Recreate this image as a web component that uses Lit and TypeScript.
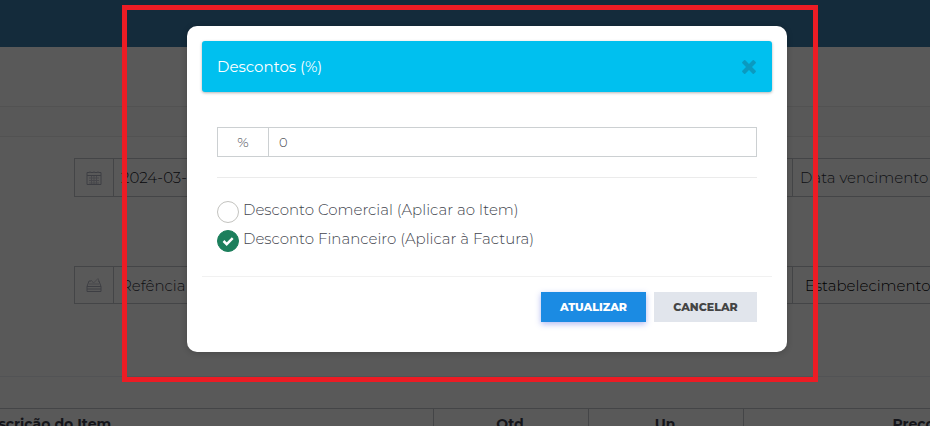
import { LitElement, html, css, svg } from "lit";
import { customElement, state } from "lit/decorators.js";

const calendarIcon = svg`<path d="M1 2.500h14v12H1zM1 5.500h14" /><path class="faint" d="M4 1v2M8 1v2M12 1v2M3 8h10M3 10.500h10M3 13h10M5.500 6v8M8 6v8M10.500 6v8" />`;
const registerIcon = svg`<path d="M1 9.500h14v5H1zM1 12h14M1 9.500L3 4h2M15 9.500L13 4h-1" /><path class="faint" d="M5 3l2.500 3L12 1.500l1 2.500M3 7h10" />`;

@customElement("app-root")
export class AppRoot extends LitElement {
  @state() private target = "invoice";

  private options = [
    { id: "item", label: "Desconto Comercial (Aplicar ao Item)" },
    { id: "invoice", label: "Desconto Financeiro (Aplicar à Factura)" },
  ];

  static styles = css`
    :host {
      display: block;
      position: relative;
      height: 100vh;
      overflow: hidden;
      background: #fff;
      color: #575962;
      font-family: Montserrat, Inter, "Open Sans", sans-serif;
      font-size: 15px;
      font-weight: 300;
    }
    * { box-sizing: border-box; }
    input, button { font: inherit; color: inherit; margin: 0; }
    .topbar { height: 47px; background: #397ba9; }
    .strip { height: 60px; border-bottom: 1px solid #ebebeb; }
    .strip.thin { height: 30px; background: #fdfdfd; }
    .form {
      display: grid;
      grid-template-columns: 1fr 177px;
      gap: 69px 30px;
      padding: 21px 0 72px 74px;
      border-bottom: 1px solid #ebedf2;
    }
    .field {
      display: flex;
      height: 39px;
      border: 1px solid #c4c6cc;
      border-right: 0;
    }
    .field.short { height: 38px; }
    .addon {
      flex: none;
      width: 39px;
      display: grid;
      place-items: center;
      border-right: 1px solid #c4c6cc;
    }
    .addon svg {
      width: 16px;
      height: 16px;
      fill: none;
      stroke: #b0b2c0;
      stroke-width: 1;
    }
    .addon .faint { stroke: #cbccd6; }
    .field input {
      flex: 1;
      min-width: 0;
      border: 0;
      padding: 0 0 0 7px;
      background: none;
      color: #14161f;
    }
    .field input.roomy { padding: 0 0 0 12px; color: #000; }
    .field input::placeholder { color: #30323c; opacity: 1; }
    .items {
      width: calc(100% + 182px);
      margin: 31px 0 0 -26px;
      border-collapse: collapse;
      table-layout: fixed;
    }
    .items th {
      height: 30px;
      padding: 0 5px 0 3px;
      border: 1px solid #c4c6cc;
      font-size: 14px;
      font-weight: 700;
      color: #3c3e4c;
    }
    .items th:first-child { text-align: left; }
    .col-name { width: 459px; }
    .col-small { width: 155px; }

    .overlay {
      position: absolute;
      inset: 0;
      padding: 5px 112px 0 122px;
      background: rgba(0, 0, 0, 0.65);
    }
    .frame {
      border: 5px solid #ec1c24;
      padding: 16px 26px 25px 60px;
    }
    .modal {
      padding: 15px;
      border-radius: 10px;
      background: #fff;
      box-shadow: 0 1px 6px rgba(0, 0, 0, 0.2);
    }
    .head {
      display: flex;
      align-items: center;
      justify-content: space-between;
      height: 51px;
      padding: 0 15px;
      border-radius: 3px;
      background: #00c0ef;
      box-shadow: 0 1px 3px rgba(0, 0, 0, 0.3);
      color: #fff;
    }
    .title { margin: 0; font-size: 15px; font-weight: 400; }
    .close {
      padding: 0;
      border: 0;
      background: none;
      width: 16px;
      height: 16px;
    }
    .close svg { display: block; width: 16px; height: 16px; fill: #0a9ac0; }
    .body { padding: 35px 15px 24px; }
    .percent {
      display: flex;
      height: 30px;
      border: 1px solid #ccd0d2;
      font-size: 13px;
      color: #484a52;
    }
    .percent label {
      width: 51px;
      display: grid;
      place-items: center;
      border-right: 1px solid #ccd0d2;
      font-size: 14px;
    }
    .percent input {
      flex: 1;
      min-width: 0;
      border: 0;
      padding: 0 10px;
      background: none;
    }
    .rule { margin: 20px 0 23px; border: 0; border-top: 1px solid #ebebeb; }
    .options { display: grid; gap: 7px; }
    .option {
      display: flex;
      gap: 4px;
      height: 22px;
      line-height: 18px;
      color: #42454e;
    }
    .mark { position: relative; width: 22px; height: 22px; }
    .mark input {
      display: block;
      appearance: none;
      width: 22px;
      height: 22px;
      border: 1px solid #c3c3bf;
      border-radius: 50%;
      background: #fff;
    }
    .mark input:checked { border-color: #1c7f5c; background: #1c7f5c; }
    .mark svg {
      position: absolute;
      inset: 0;
      fill: none;
      stroke: #fff;
      stroke-width: 2.5;
      pointer-events: none;
    }
    .foot {
      display: flex;
      justify-content: flex-end;
      gap: 8px;
      padding: 15px;
      border-top: 1px solid #f1f1f1;
    }
    .btn {
      height: 30px;
      padding: 0;
      border: 0;
      font-size: 11px;
      font-weight: 800;
    }
    .primary {
      width: 105px;
      background: #1b8be3;
      color: #fff;
      box-shadow: 0 2px 6px rgba(60, 80, 220, 0.4);
    }
    .secondary { width: 103px; background: #e1e5ec; color: #444; }
  `;

  private field(icon: unknown, label: string, kind = "", value = "", inputKind = "") {
    return html`<div class="field ${kind}">
      <span class="addon"><svg viewBox="0 0 16 16" aria-hidden="true">${icon}</svg></span>
      <input class=${inputKind} type="text" aria-label=${label} placeholder=${label} .value=${value} />
    </div>`;
  }

  render() {
    return html`
      <main>
        <div class="topbar"></div>
        <div class="strip"></div>
        <div class="strip thin"></div>
        <div class="form">
          ${this.field(calendarIcon, "Data", "", "2024-03-")}
          ${this.field(calendarIcon, "Data vencimento")}
          ${this.field(registerIcon, "Refência", "short")}
          ${this.field(registerIcon, "Estabelecimento", "short", "Estabelecimento", "roomy")}
        </div>
        <table class="items">
          <colgroup>
            <col class="col-name" /><col class="col-small" /><col class="col-small" /><col />
          </colgroup>
          <thead>
            <tr><th>Descrição do Item</th><th>Qtd</th><th>Un</th><th>Preço</th></tr>
          </thead>
        </table>
      </main>
      <div class="overlay">
        <div class="frame">
          <section class="modal" role="dialog" aria-labelledby="title">
            <header class="head">
              <h2 class="title" id="title">Descontos (%)</h2>
              <button class="close" type="button" aria-label="Fechar">
                <svg viewBox="0 0 16 16"><path d="M4.300 1.300L8 5l3.700-3.700q.6-.5 1.200 0l1.800 1.800q.5.600 0 1.200L11 8l3.700 3.700q.5.600 0 1.200l-1.800 1.800q-.6.500-1.200 0L8 11l-3.700 3.700q-.6.500-1.200 0l-1.800-1.800q-.5-.6 0-1.200L5 8 1.300 4.300q-.5-.6 0-1.200l1.800-1.800q.6-.5 1.200 0z" /></svg>
              </button>
            </header>
            <div class="body">
              <div class="percent">
                <label for="amount">%</label>
                <input id="amount" type="text" .value=${"0"} />
              </div>
              <hr class="rule" />
              <div class="options">
                ${this.options.map(
                  (o) => html`<label class="option">
                    <span class="mark">
                      <input type="radio" name="target" .checked=${this.target === o.id} @change=${() => (this.target = o.id)} />
                      ${this.target === o.id
                        ? html`<svg viewBox="0 0 22 22"><path d="M6.500 11l3.200 3.200 6-6" /></svg>`
                        : ""}
                    </span>
                    <span>${o.label}</span>
                  </label>`
                )}
              </div>
            </div>
            <footer class="foot">
              <button class="btn primary" type="button">ATUALIZAR</button>
              <button class="btn secondary" type="button">CANCELAR</button>
            </footer>
          </section>
        </div>
      </div>
    `;
  }
}
